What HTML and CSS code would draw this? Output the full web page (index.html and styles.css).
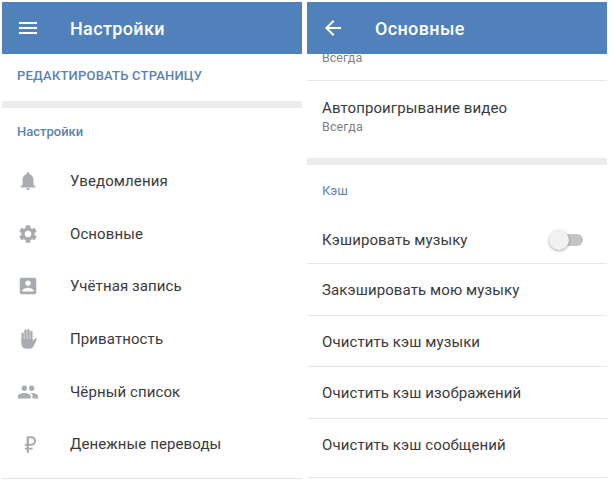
FILE: index.html
```html
<!DOCTYPE html>
<html lang="en">
<head>
    <meta charset="UTF-8">
    <meta name="viewport" content="width=device-width, initial-scale=1.0">
    <title>Настройки</title>
    <link rel="stylesheet" href="styles.css">
</head>
<body>
    <div class="screens">
        <section class="screen">
            <header class="topbar">
                <svg class="topbar-icon" viewBox="0 0 24 24"><path d="M3 18h18v-2H3v2zm0-5h18v-2H3v2zm0-7v2h18V6H3z"/></svg>
                <h1>Настройки</h1>
            </header>
            <div class="edit-link">РЕДАКТИРОВАТЬ СТРАНИЦУ</div>
            <div class="band"></div>
            <div class="section-title">Настройки</div>
            <ul class="menu">
                <li>
                    <svg viewBox="0 0 24 24"><path d="M12 22c1.1 0 2-.9 2-2h-4c0 1.1.9 2 2 2zm6-6v-5c0-3.07-1.63-5.64-4.5-6.32V4c0-.83-.67-1.5-1.5-1.5s-1.5.67-1.5 1.5v.68C7.64 5.36 6 7.92 6 11v5l-2 2v1h16v-1l-2-2z"/></svg>
                    <span>Уведомления</span>
                </li>
                <li>
                    <svg viewBox="0 0 24 24"><path d="M19.14 12.94c.04-.3.06-.61.06-.94s-.02-.64-.07-.94l2.03-1.58c.18-.14.23-.41.12-.61l-1.92-3.32c-.12-.22-.37-.29-.59-.22l-2.39.96c-.5-.38-1.03-.7-1.62-.94l-.36-2.54c-.04-.24-.24-.41-.48-.41h-3.84c-.24 0-.43.17-.47.41l-.36 2.54c-.59.24-1.13.57-1.62.94l-2.39-.96c-.22-.08-.47 0-.59.22L2.74 8.87c-.12.21-.08.47.12.61l2.03 1.58c-.05.3-.09.63-.09.94s.02.64.07.94l-2.03 1.58c-.18.14-.23.41-.12.61l1.92 3.32c.12.22.37.29.59.22l2.39-.96c.5.38 1.03.7 1.62.94l.36 2.54c.05.24.24.41.48.41h3.84c.24 0 .44-.17.47-.41l.36-2.54c.59-.24 1.13-.56 1.62-.94l2.39.96c.22.08.47 0 .59-.22l1.92-3.32c.12-.22.07-.47-.12-.61l-2.01-1.58zM12 15.6c-1.98 0-3.6-1.62-3.6-3.6s1.62-3.6 3.6-3.6 3.6 1.62 3.6 3.6-1.62 3.6-3.6 3.6z"/></svg>
                    <span>Основные</span>
                </li>
                <li>
                    <svg viewBox="0 0 24 24"><path d="M3 5v14c0 1.1.9 2 2 2h14c1.1 0 2-.9 2-2V5c0-1.1-.9-2-2-2H5c-1.1 0-2 .9-2 2zm12 4c0 1.66-1.34 3-3 3s-3-1.34-3-3 1.34-3 3-3 3 1.34 3 3zm-9 8c0-2 4-3.1 6-3.1s6 1.1 6 3.1v1H6v-1z"/></svg>
                    <span>Учётная запись</span>
                </li>
                <li>
                    <svg viewBox="0 0 24 24">
                        <rect x="4.800" y="5" width="2.600" height="10" rx="1.300"/>
                        <rect x="8" y="1.500" width="2.600" height="12" rx="1.300"/>
                        <rect x="11.200" y="1" width="2.600" height="12" rx="1.300"/>
                        <rect x="14.400" y="3" width="2.600" height="11" rx="1.300"/>
                        <path d="M4.800 12h12.200v2.500l2.600-3c.8-.8 2-.4 2.200.5l-3.300 7c-1 2.300-2.800 3.500-5.500 3.500h-3c-3 0-5.200-2.200-5.200-5.500V12z"/>
                    </svg>
                    <span>Приватность</span>
                </li>
                <li>
                    <svg viewBox="0 0 24 24"><path d="M16 11c1.66 0 2.99-1.34 2.99-3S17.66 5 16 5c-1.66 0-3 1.34-3 3s1.34 3 3 3zm-8 0c1.66 0 2.99-1.34 2.99-3S9.66 5 8 5C6.34 5 5 6.34 5 8s1.34 3 3 3zm0 2c-2.33 0-7 1.17-7 3.5V19h14v-2.5c0-2.33-4.67-3.5-7-3.5zm8 0c-.29 0-.62.02-.97.05 1.16.84 1.97 1.97 1.97 3.45V19h6v-2.5c0-2.33-4.67-3.5-7-3.5z"/></svg>
                    <span>Чёрный список</span>
                </li>
                <li>
                    <svg viewBox="0 0 24 24"><path d="M10.500 3.500h5a5.250 5.250 0 0 1 0 10.500H13v2h4v2h-4v3.500h-2.500V18h-2v-2h2v-2h-2v-2.200h2V3.500zM13 5.800v6h2.500a3 3 0 0 0 0-6H13z"/></svg>
                    <span>Денежные переводы</span>
                </li>
            </ul>
            <div class="end-line"></div>
        </section>

        <section class="screen">
            <header class="topbar">
                <svg class="topbar-icon" viewBox="0 0 24 24"><path d="M20 11H7.830l5.590-5.590L12 4l-8 8 8 8 1.410-1.410L7.830 13H20v-2z"/></svg>
                <h1>Основные</h1>
            </header>
            <div class="cut-row"><small>Всегда</small></div>
            <div class="row-double">
                <span>Автопроигрывание видео</span>
                <small>Всегда</small>
            </div>
            <div class="band band-right"></div>
            <div class="section-title section-cache">Кэш</div>
            <div class="row row-first">
                <span>Кэшировать музыку</span>
                <div class="switch"></div>
            </div>
            <div class="row"><span>Закэшировать мою музыку</span></div>
            <div class="row"><span>Очистить кэш музыки</span></div>
            <div class="row"><span>Очистить кэш изображений</span></div>
            <div class="row row-last"><span>Очистить кэш сообщений</span></div>
        </section>
    </div>
</body>
</html>
```
FILE: styles.css
```css
body {
    margin: 0;
    padding: 2px 0 0 2px;
    background: #fff;
    font-family: Roboto, Arial, sans-serif;
    color: #3a3a3a;
}
.screens {
    display: flex;
    gap: 5px;
}
.screen {
    width: 300px;
}
.topbar {
    height: 52px;
    background: #5081bb;
    display: flex;
    align-items: center;
    color: #fff;
}
.topbar-icon {
    width: 24px;
    height: 24px;
    margin-left: 14px;
    fill: #fff;
}
.topbar h1 {
    margin: 0 0 0 30px;
    font-size: 18px;
    font-weight: 500;
    letter-spacing: 0.35px;
}
.edit-link {
    height: 47px;
    line-height: 43px;
    padding-left: 15px;
    font-size: 13px;
    font-weight: 500;
    letter-spacing: 0.2px;
    color: #5c83ad;
}
.band {
    height: 7px;
    background: #ececec;
}
.section-title {
    height: 47px;
    line-height: 48px;
    padding-left: 15px;
    font-size: 13px;
    font-weight: 500;
    color: #5c83ad;
}
.menu {
    list-style: none;
    margin: 0;
    padding: 0;
}
.menu li {
    height: 52.6px;
    display: flex;
    align-items: center;
    font-size: 15px;
    letter-spacing: 0.1px;
}
.menu svg {
    width: 22px;
    height: 22px;
    margin-left: 15px;
    margin-right: 31px;
    fill: #a8abb0;
}
.end-line {
    height: 7px;
    border-bottom: 1px solid #e6e6e6;
}
.cut-row {
    height: 27px;
    box-sizing: border-box;
    overflow: hidden;
    border-bottom: 1px solid #e6e6e6;
    padding: 0 15px 15px;
    display: flex;
    align-items: flex-end;
}
small {
    font-size: 12.500px;
    color: #828282;
}
.row-double {
    height: 77px;
    box-sizing: border-box;
    padding: 18px 15px 0;
    display: flex;
    flex-direction: column;
    gap: 2px;
    font-size: 15px;
    letter-spacing: 0.1px;
}
.band-right {
    height: 7px;
}
.section-cache {
    height: 50px;
    line-height: 52px;
    font-weight: 400;
}
.row {
    height: 51.500px;
    box-sizing: border-box;
    padding: 2px 15px 0;
    display: flex;
    align-items: center;
    justify-content: space-between;
    font-size: 15px;
    letter-spacing: 0.1px;
    border-bottom: 1px solid #e6e6e6;
}
.row-first {
    height: 49px;
}
.row-last {
    height: 59px;
    padding-bottom: 7px;
}
.switch {
    position: relative;
    width: 32px;
    height: 12px;
    margin-right: 9px;
    background: #c4c4c4;
    border-radius: 6px;
}
.switch::before {
    content: "";
    position: absolute;
    left: -2px;
    top: -4px;
    width: 20px;
    height: 20px;
    border-radius: 50%;
    background: #f1f1f1;
    box-shadow: 0 1px 3px rgba(0, 0, 0, 0.35);
}
```
